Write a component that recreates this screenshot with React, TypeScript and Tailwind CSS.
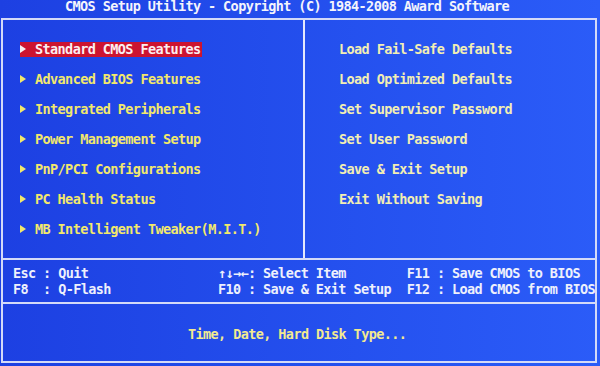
import React from "react";

const mono = { fontFamily: '"DejaVu Sans Mono", "Liberation Mono", monospace' };

const leftItems = [
  "Standard CMOS Features",
  "Advanced BIOS Features",
  "Integrated Peripherals",
  "Power Management Setup",
  "PnP/PCI Configurations",
  "PC Health Status",
  "MB Intelligent Tweaker(M.I.T.)",
];

const rightItems = [
  "Load Fail-Safe Defaults",
  "Load Optimized Defaults",
  "Set Supervisor Password",
  "Set User Password",
  "Save & Exit Setup",
  "Exit Without Saving",
];

function Arrow({ color }: { color: string }) {
  return (
    <svg width="6" height="8" viewBox="0 0 6 8" className="shrink-0">
      <polygon points="0,0 6,4 0,8" fill={color} />
    </svg>
  );
}

export default function App() {
  return (
    <div
      className="w-[600px] h-[366px] overflow-hidden bg-linear-to-r from-[#1d40e2] to-[#2b5cf8] font-bold text-[13.5px] tracking-[-0.6px] leading-[15px]"
      style={mono}
    >
      <div className="h-[18px] pl-[65px]">
        <div className="leading-[12px] whitespace-pre text-[#f4f4fc]">
          CMOS Setup Utility - Copyright (C) 1984-2008 Award Software
        </div>
      </div>
      <div className="ml-[1px] w-[596px] h-[345px] border-2 border-[#d4daf8] flex flex-col">
        <div className="h-[238px] flex">
          <div className="w-[300px] pt-[14px] pl-[17px]">
            {leftItems.map((t, i) => (
              <div key={t} className="h-[30px] flex items-center">
                {i === 0 ? (
                  <div className="flex items-center h-[15px] bg-[#cc1430] pr-[1px]">
                    <div className="w-[15px] flex items-center">
                      <Arrow color="#f8f0f0" />
                    </div>
                    <span className="whitespace-pre text-[#fbeef0]">{t}</span>
                  </div>
                ) : (
                  <div className="flex items-center h-[15px]">
                    <div className="w-[15px] flex items-center">
                      <Arrow color="#f2e86c" />
                    </div>
                    <span className="whitespace-pre text-[#f2e86c]">{t}</span>
                  </div>
                )}
              </div>
            ))}
          </div>
          <div className="w-[2px] bg-[#e4e8fc]" />
          <div className="flex-1 pt-[14px] pl-[34px]">
            {rightItems.map((t) => (
              <div key={t} className="h-[30px] flex items-center">
                <span className="whitespace-pre text-[#f2eeb4]">{t}</span>
              </div>
            ))}
          </div>
        </div>
        <div className="h-[2px] bg-[#d4daf8]" />
        <div className="h-[42px] pt-[5px] pl-[10px] flex text-[#eef0fc] leading-[16px]">
          <div className="w-[205px] whitespace-pre">
            <div>Esc : Quit</div>
            <div>F8  : Q-Flash</div>
          </div>
          <div className="w-[189px] whitespace-pre">
            <div>↑↓→←: Select Item</div>
            <div>F10 : Save &amp; Exit Setup</div>
          </div>
          <div className="whitespace-pre">
            <div>F11 : Save CMOS to BIOS</div>
            <div>F12 : Load CMOS from BIOS</div>
          </div>
        </div>
        <div className="h-[2px] bg-[#d4daf8]" />
        <div className="flex-1 flex items-center pt-[3px] pl-[185px]">
          <span className="whitespace-pre text-[#f2ea90]">Time, Date, Hard Disk Type...</span>
        </div>
      </div>
    </div>
  );
}
